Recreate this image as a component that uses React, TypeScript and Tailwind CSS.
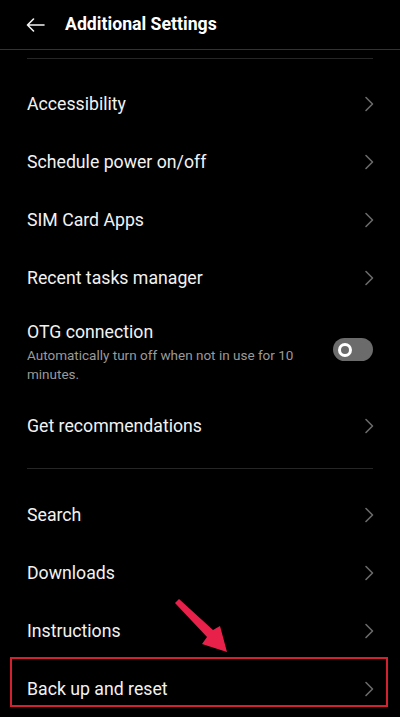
import { ReactNode } from "react";

const font = { fontFamily: "Roboto, 'Noto Sans', sans-serif" };

function Chevron() {
  return (
    <svg width="10" height="16" viewBox="0 0 10 16" className="shrink-0">
      <path d="M2 1.5 L8.5 8 L2 14.5" fill="none" stroke="#6a6a6a" strokeWidth="1.6" strokeLinecap="round" strokeLinejoin="round" />
    </svg>
  );
}

function Row({ label }: { label: string }) {
  return (
    <div className="flex h-[58px] items-center justify-between pl-[27px] pr-[26px] pt-[2px]">
      <span className="text-[17.7px] text-[#f2f2f2]">{label}</span>
      <Chevron />
    </div>
  );
}

function Toggle() {
  return (
    <div className="flex h-[23px] w-[40px] shrink-0 items-center rounded-full bg-[#6b6b6b] pl-[5px]">
      <div className="h-[14px] w-[14px] rounded-full border-[3px] border-white bg-[#6b6b6b]" />
    </div>
  );
}

function Divider({ className = "" }: { className?: string }): ReactNode {
  return <div className={`mx-[27px] h-px bg-[#262626] ${className}`} />;
}

export default function App() {
  return (
    <div className="relative h-[717px] w-[400px] overflow-hidden bg-black" style={font}>
      {/* header */}
      <div className="flex h-[50px] items-center border-b border-[#333333] pl-[26px]">
        <svg width="19" height="14" viewBox="0 0 19 14">
          <path d="M18 7 H1.5 M7.5 1 L1.5 7 L7.5 13" fill="none" stroke="#f2f2f2" strokeWidth="1.6" strokeLinecap="round" strokeLinejoin="round" />
        </svg>
        <span className="ml-[20px] text-[17.7px] font-bold text-white">Additional Settings</span>
      </div>

      <Divider className="mt-[8px]" />
      <div className="h-[15px]" />

      <Row label="Accessibility" />
      <Row label="Schedule power on/off" />
      <Row label="SIM Card Apps" />
      <Row label="Recent tasks manager" />

      <div className="flex h-[90px] items-start justify-between pl-[27px] pr-[27px] pt-[14px]">
        <div className="w-[290px]">
          <div className="text-[17.7px] leading-[24px] text-[#f2f2f2]">OTG connection</div>
          <div className="mt-[2px] text-[13.5px] leading-[19px] text-[#9a9a9a]">
            Automatically turn off when not in use for 10 minutes.
          </div>
        </div>
        <div className="mt-[18px]">
          <Toggle />
        </div>
      </div>

      <Row label="Get recommendations" />
      <Divider className="mt-[14px]" />
      <div className="h-[16px]" />

      <Row label="Search" />
      <Row label="Downloads" />
      <Row label="Instructions" />
      <Row label="Back up and reset" />

      {/* annotation */}
      <div className="absolute left-[10px] top-[657px] h-[50px] w-[378px] border-2 border-[#d3212f]" />
      <svg className="absolute left-0 top-0" width="400" height="717" viewBox="0 0 400 717">
        <polygon points="175,603 179,599 213,630 220,626 227,652 202,644 207,637" fill="#e8214b" strokeLinejoin="round" />
      </svg>
    </div>
  );
}
